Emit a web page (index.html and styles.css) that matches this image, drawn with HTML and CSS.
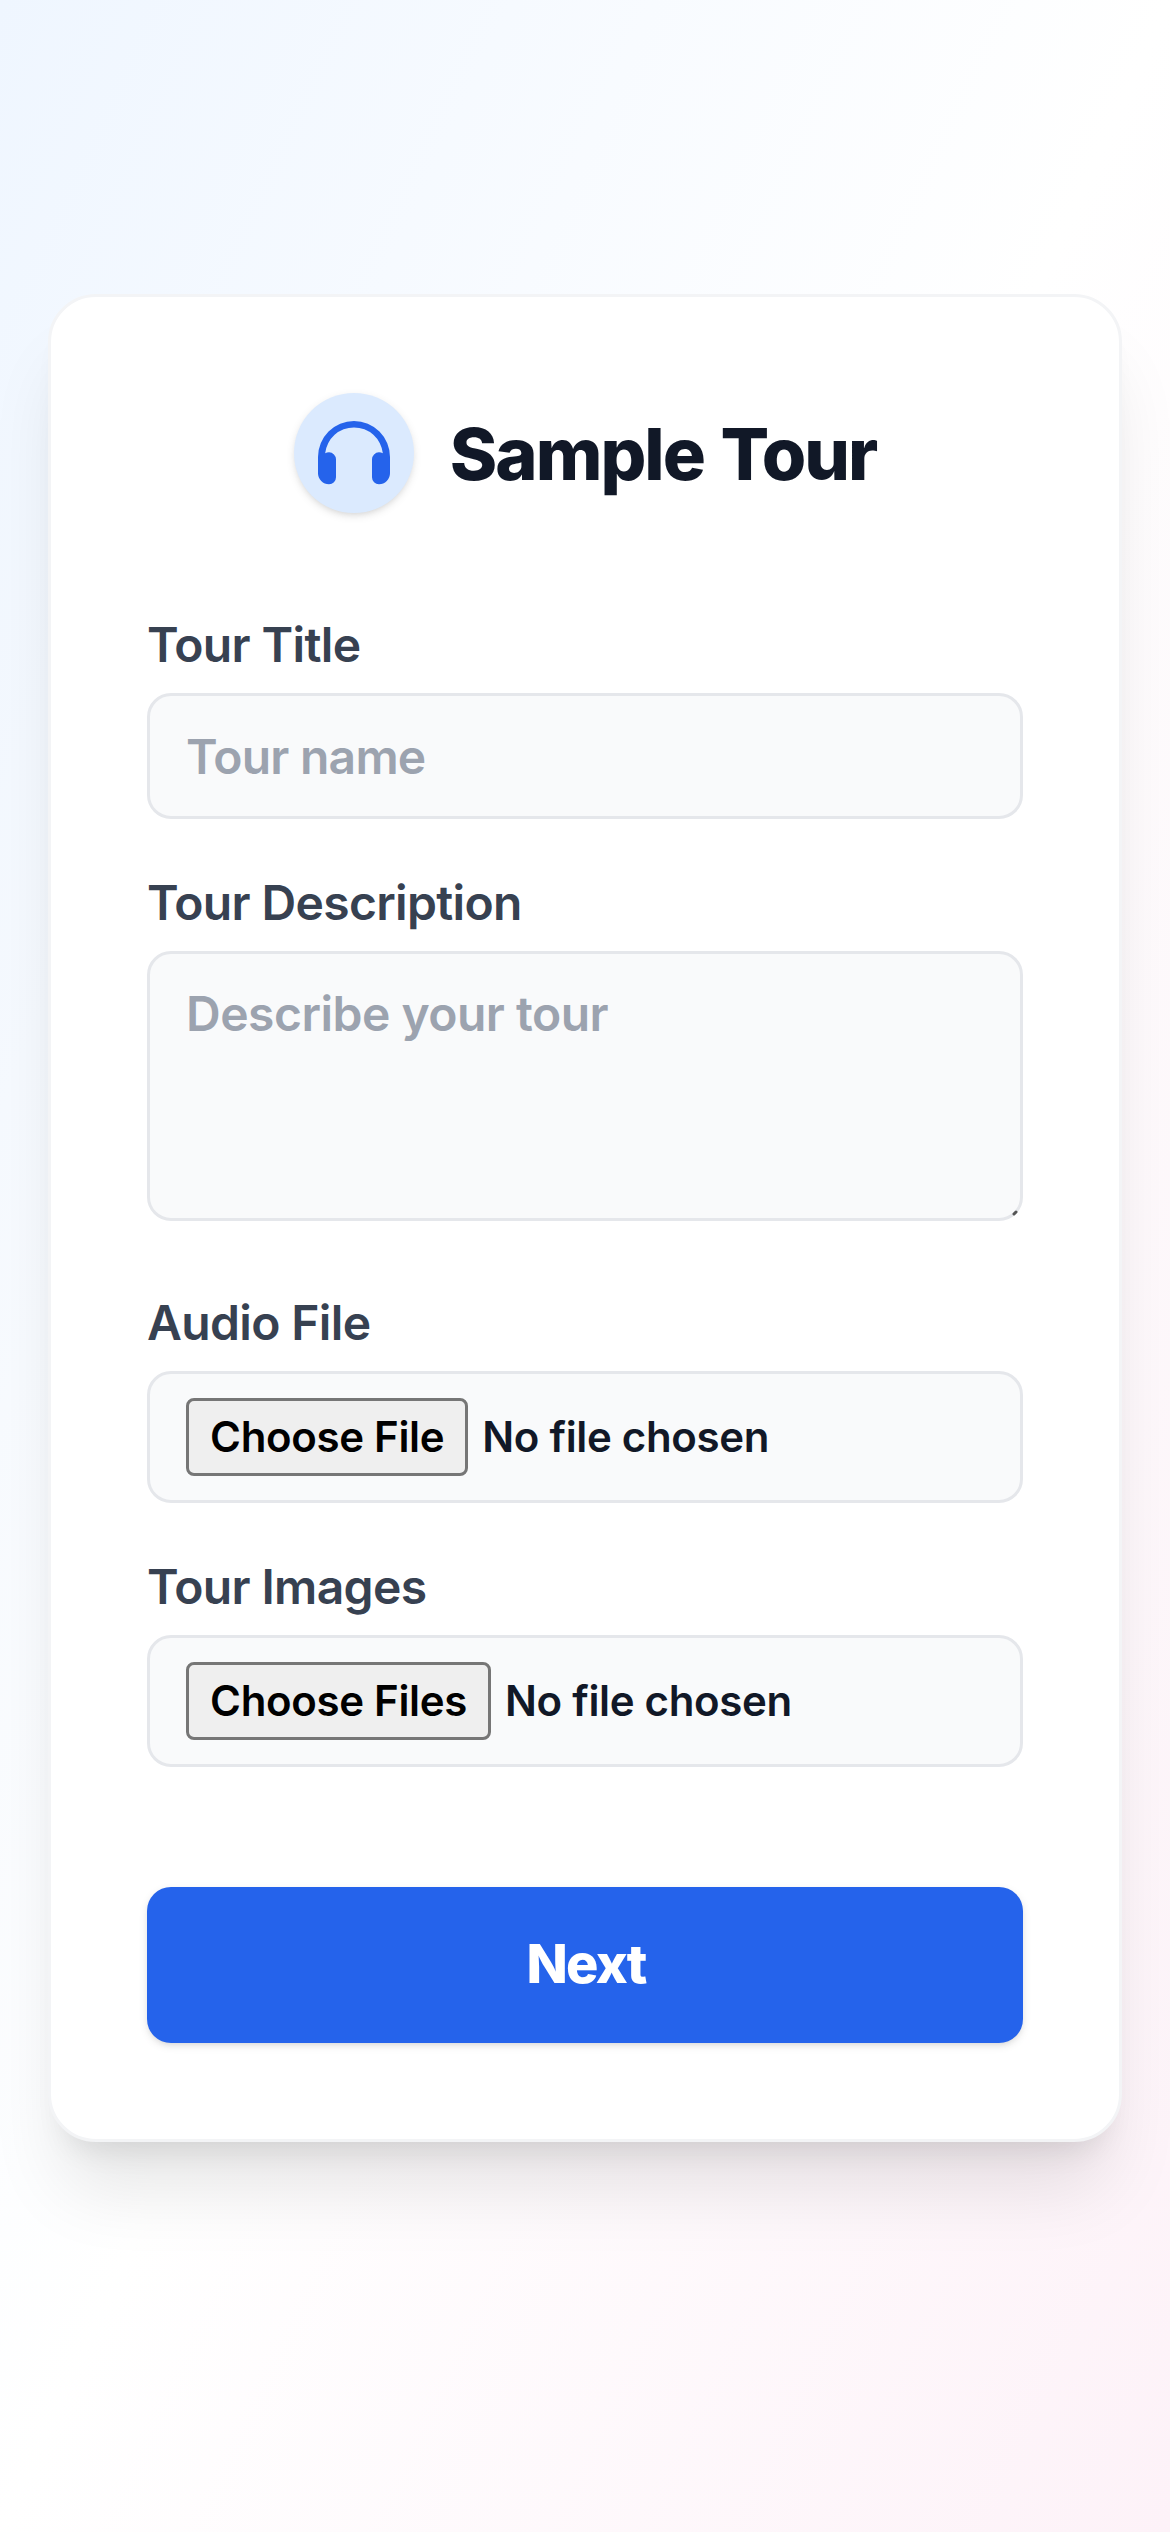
FILE: index.html
```html
<!DOCTYPE html>
<html lang="en">
<head>
<meta charset="utf-8">
<title>Sample Tour</title>
<link rel="stylesheet" href="styles.css">
</head>
<body>
<main class="card">
  <header class="header">
    <span class="badge">
      <svg class="badge-icon" viewBox="0 0 216 190" aria-hidden="true">
        <path d="M0 108A108 108 0 0 1 216 108V157A33 33 0 0 1 183 190A21 21 0 0 1 162 169V115A21 21 0 0 1 183 94Q189 94 194.500 97A87 87 0 0 0 21.500 97Q27 94 33 94A21 21 0 0 1 54 115V169A21 21 0 0 1 33 190A33 33 0 0 1 0 157Z"/>
      </svg>
    </span>
    <h1 class="title">Sample Tour</h1>
  </header>
  <form class="form">
    <div class="field">
      <label class="label" for="name">Tour Title</label>
      <input class="control" id="name" type="text" placeholder="Tour name">
    </div>
    <div class="field field-description">
      <label class="label" for="description">Tour Description</label>
      <div class="area">
        <textarea class="control control-area" id="description" placeholder="Describe your tour"></textarea>
        <svg class="grip" viewBox="0 0 6 6" aria-hidden="true"><path d="M2 4L4 2"/></svg>
      </div>
    </div>
    <div class="field">
      <label class="label" for="audio">Audio File</label>
      <input class="control control-file" id="audio" type="file">
    </div>
    <div class="field">
      <label class="label" for="images">Tour Images</label>
      <input class="control control-file" id="images" type="file" multiple>
    </div>
    <button class="submit" type="button">Next</button>
  </form>
</main>
</body>
</html>
```
FILE: styles.css
```css
* {
  box-sizing: border-box;
}

body {
  margin: 0;
  min-height: 2532px;
  padding: 0 48px;
  display: flex;
  flex-direction: column;
  justify-content: center;
  padding-bottom: 96px;
  background: linear-gradient(to bottom right, #eff6ff, #ffffff, #fdf2f8);
  font-family: Inter, "Liberation Sans", sans-serif;
  font-size: 48px;
  line-height: 72px;
  color: #111827;
}

.card {
  padding: 96px;
  background: #ffffff;
  border: 3px solid #f3f4f6;
  border-radius: 48px;
  box-shadow: 0 60px 75px -15px rgba(0, 0, 0, 0.1), 0 24px 30px -18px rgba(0, 0, 0, 0.1);
}

.header {
  display: flex;
  align-items: center;
  justify-content: center;
  gap: 36px;
  margin-bottom: 96px;
}

.badge {
  display: flex;
  align-items: center;
  justify-content: center;
  width: 120px;
  height: 120px;
  border-radius: 50%;
  background: #dbeafe;
  box-shadow: 0 3px 9px rgba(0, 0, 0, 0.1), 0 3px 6px -3px rgba(0, 0, 0, 0.1);
}

.badge-icon {
  width: 72px;
  height: 63.333px;
  fill: #2563eb;
}

.title {
  margin: 0;
  padding-top: 2px;
  font-size: 72px;
  line-height: 96px;
  font-weight: 800;
  letter-spacing: -0.028em;
  word-spacing: 3px;
}

.form {
  display: flex;
  flex-direction: column;
  gap: 48px;
}

.field {
  display: flex;
  flex-direction: column;
  gap: 12px;
}

.field-description {
  margin-bottom: 18px;
}

.label {
  font-weight: 600;
  letter-spacing: -0.65px;
  color: #374151;
}

.control {
  display: block;
  width: 100%;
  height: 126px;
  margin: 0;
  padding: 24px 36px;
  border: 3px solid #e5e7eb;
  border-radius: 24px;
  background: #f9fafb;
  color: #111827;
  font: inherit;
  font-weight: 600;
  letter-spacing: -0.75px;
  outline: none;
}

.control::placeholder {
  color: #9ca3af;
  opacity: 1;
}

.area {
  position: relative;
}

.control-area {
  height: 270px;
  letter-spacing: -0.5px;
  resize: none;
  overflow: hidden;
}

.grip {
  position: absolute;
  right: 5px;
  bottom: 5px;
  width: 6px;
  height: 6px;
  stroke: #555555;
  stroke-width: 3;
  stroke-linecap: round;
}

.control-file {
  height: 132px;
  font-size: 42px;
  line-height: 60px;
  letter-spacing: -0.32px;
}

.control-file::file-selector-button {
  box-sizing: border-box;
  height: 78px;
  margin: 0 14px 0 0;
  padding: 3px 21px;
  border: 3px solid #767676;
  border-radius: 8px;
  background: #efefef;
  color: #000000;
  font: inherit;
  letter-spacing: inherit;
}

.submit {
  height: 156px;
  margin-top: 72px;
  padding: 35px 35px 37px 37px;
  border: 0;
  border-radius: 24px;
  background: #2563eb;
  box-shadow: 0 3px 9px rgba(0, 0, 0, 0.1), 0 3px 6px -3px rgba(0, 0, 0, 0.1);
  color: #ffffff;
  font-family: inherit;
  font-size: 54px;
  line-height: 84px;
  font-weight: 800;
  letter-spacing: -1.8px;
}
```
